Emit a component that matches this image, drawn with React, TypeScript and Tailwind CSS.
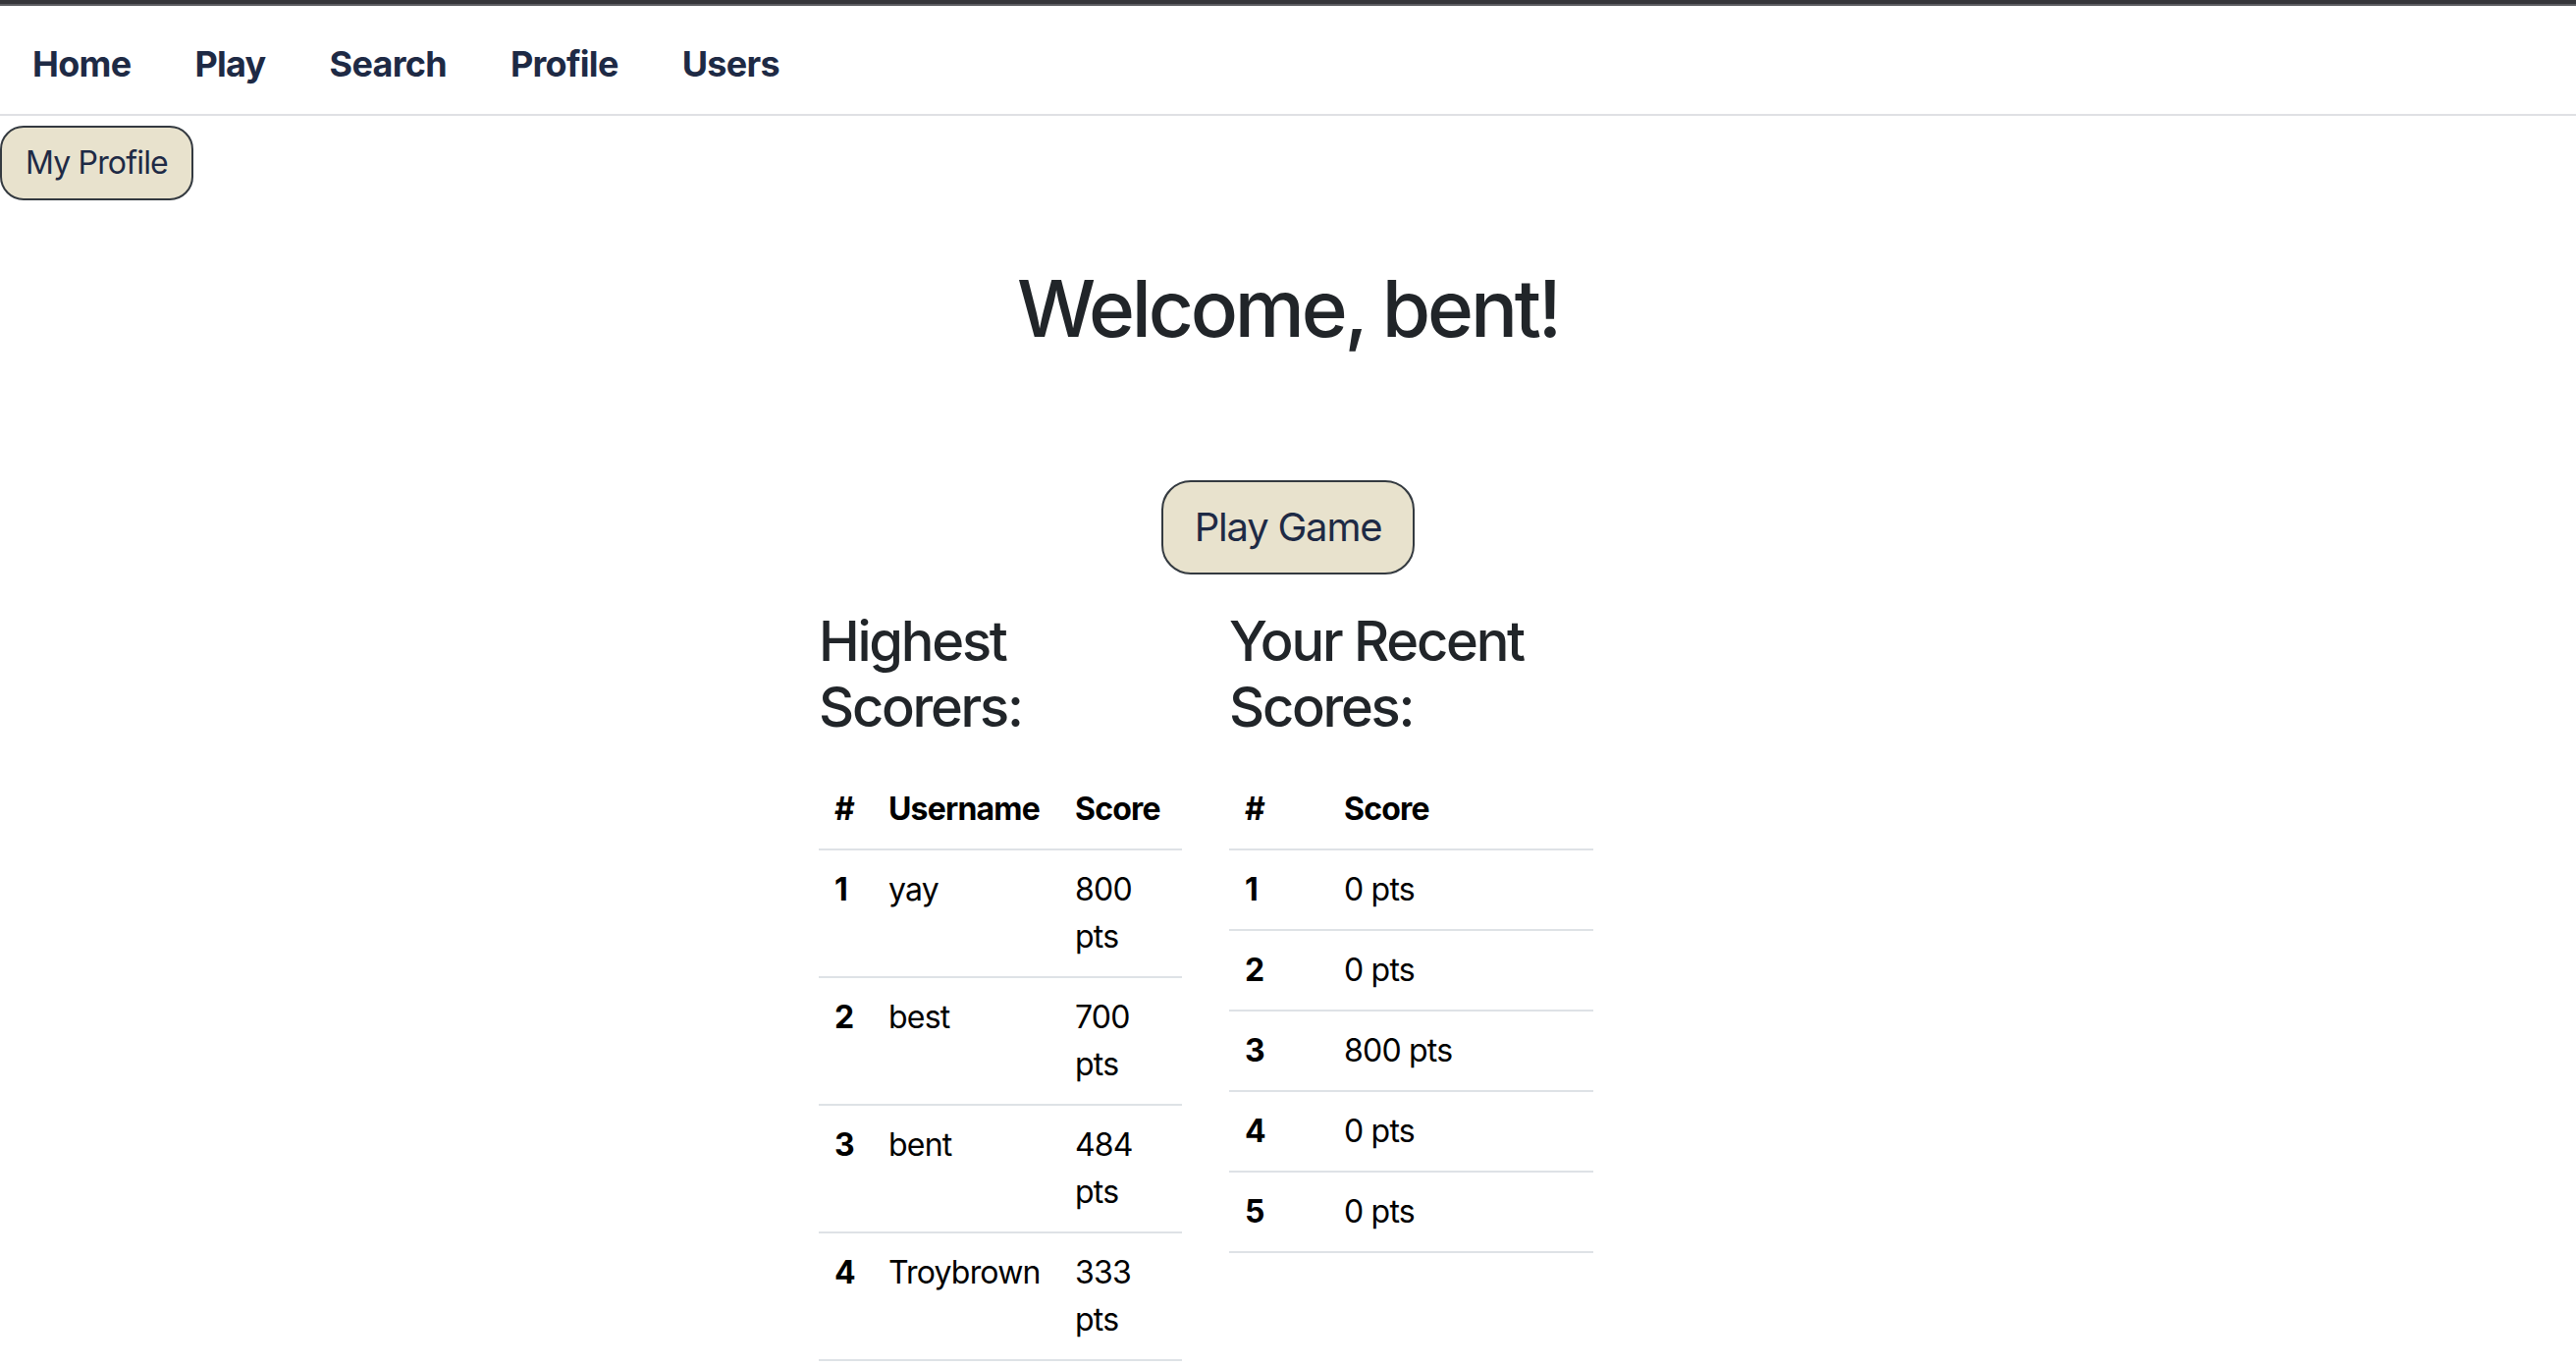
const links = ["Home", "Play", "Search", "Profile", "Users"];

const highest = [
  { rank: 1, name: "yay", score: 800 },
  { rank: 2, name: "best", score: 700 },
  { rank: 3, name: "bent", score: 484 },
  { rank: 4, name: "Troybrown", score: 333 },
];

const recent = [0, 0, 800, 0, 0];

function Cell({ head, children }: { head?: boolean; children: React.ReactNode }) {
  const cls = "px-[16px] py-[16px] text-left align-top border-b-2 border-[#dee2e6] text-[32px] leading-[1.5] tracking-[-0.025em] text-black";
  return head ? <th className={cls + " font-bold"}>{children}</th> : <td className={cls}>{children}</td>;
}

export default function App() {
  return (
    <div className="h-screen overflow-hidden bg-white font-['Inter',sans-serif]">
      <div className="h-[4px] bg-[#35363a]" />
      <div className="h-[2px] bg-[#5c5d61]" />

      {/* top nav */}
      <nav className="flex gap-[65px] border-b-2 border-[#dfe0e4] pl-[33px] pt-[32px] pb-[24px]">
        {links.map((l) => (
          <a key={l} className="text-[36px] font-bold leading-[1.5] tracking-[-0.02em] text-[#1e2a45]">
            {l}
          </a>
        ))}
      </nav>

      <button className="mt-[10px] rounded-[24px] border-2 border-[#343a40] bg-[#e8e2cd] px-[24px] py-[12px] text-[32px] leading-[1.5] tracking-[-0.026em] text-[#1e2a45]">
        My Profile
      </button>

      <h1 className="mt-[62px] text-center text-[80px] font-medium leading-[1.2] tracking-[-0.04em] text-[#212529]">
        Welcome, bent!
      </h1>

      <div className="mt-[127px] flex justify-center">
        <button className="rounded-[30px] border-2 border-[#343a40] bg-[#e8e2cd] px-[32px] py-[16px] text-[40px] leading-[1.5] tracking-[-0.03em] text-[#1e2a45]">
          Play Game
        </button>
      </div>

      <div className="mt-[35px] flex gap-[48px] pl-[834px]">
        {/* highest scorers */}
        <div className="w-[370px]">
          <h3 className="text-[56px] font-medium leading-[1.2] tracking-[-0.04em] text-[#212529]">Highest Scorers:</h3>
          <table className="mt-[30px] w-full table-fixed border-collapse">
            <colgroup>
              <col className="w-[55px]" />
              <col className="w-[190px]" />
              <col />
            </colgroup>
            <thead>
              <tr>
                <Cell head>#</Cell>
                <Cell head>Username</Cell>
                <Cell head>Score</Cell>
              </tr>
            </thead>
            <tbody>
              {highest.map((r) => (
                <tr key={r.rank}>
                  <Cell head>{r.rank}</Cell>
                  <Cell>{r.name}</Cell>
                  <Cell>{r.score} pts</Cell>
                </tr>
              ))}
            </tbody>
          </table>
        </div>

        {/* recent scores */}
        <div className="w-[371px]">
          <h3 className="text-[56px] font-medium leading-[1.2] tracking-[-0.04em] text-[#212529]">Your Recent Scores:</h3>
          <table className="mt-[30px] w-full table-fixed border-collapse">
            <colgroup>
              <col className="w-[101px]" />
              <col />
            </colgroup>
            <thead>
              <tr>
                <Cell head>#</Cell>
                <Cell head>Score</Cell>
              </tr>
            </thead>
            <tbody>
              {recent.map((s, i) => (
                <tr key={i}>
                  <Cell head>{i + 1}</Cell>
                  <Cell>{s} pts</Cell>
                </tr>
              ))}
            </tbody>
          </table>
        </div>
      </div>
    </div>
  );
}
